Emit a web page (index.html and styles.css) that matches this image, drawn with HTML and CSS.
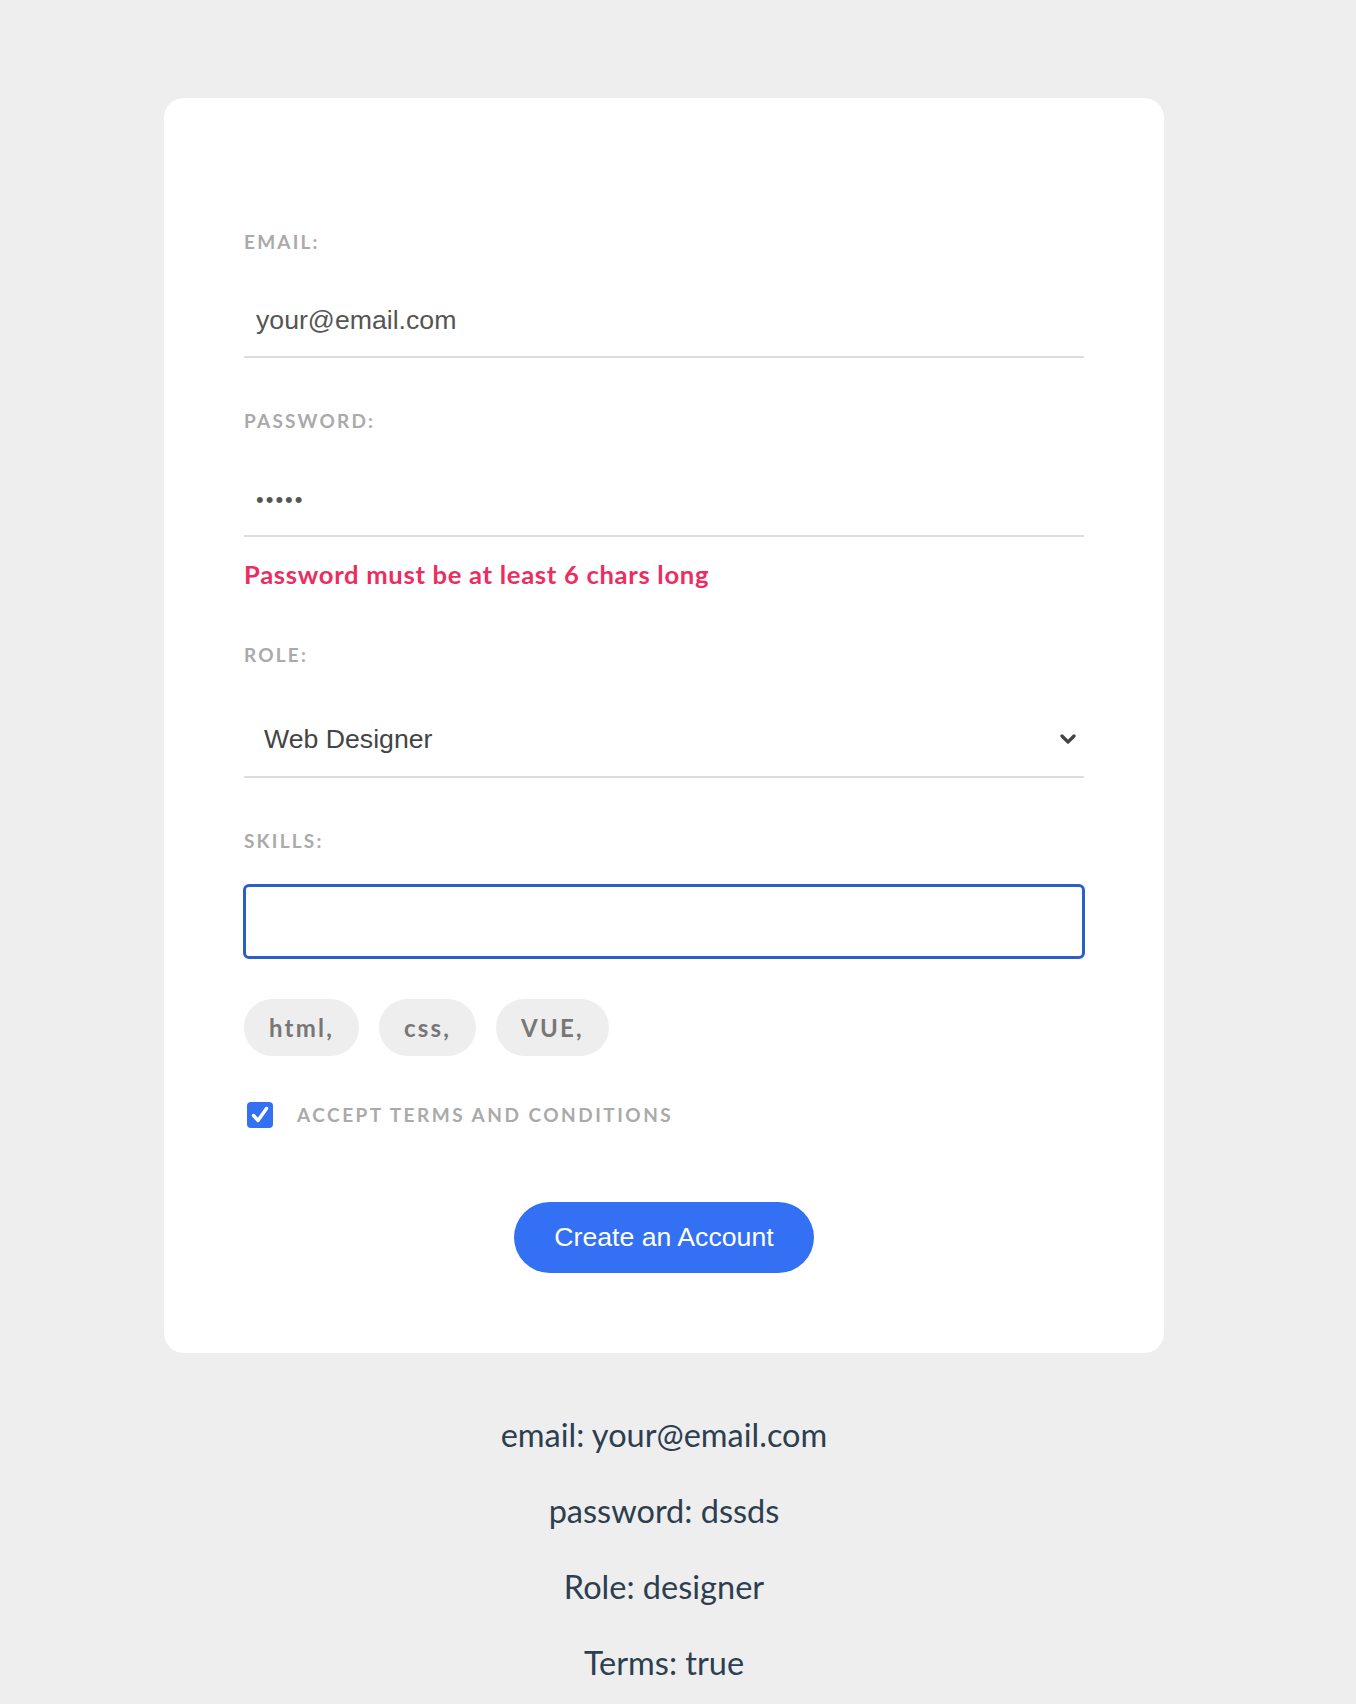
FILE: index.html
```html
<!DOCTYPE html>
<html lang="en">
<head>
<meta charset="utf-8">
<title>Sign up form</title>
<link rel="stylesheet" href="styles.css">
</head>
<body>
<div class="page">
  <form class="card">
    <label class="label">Email:</label>
    <input class="field" type="text" value="your@email.com">

    <label class="label">Password:</label>
    <div class="field field-pass">•••••</div>
    <div class="error">Password must be at least 6 chars long</div>

    <label class="label">Role:</label>
    <div class="select">
      <span>Web Designer</span>
      <svg class="chev" width="16" height="12" viewBox="0 0 16 12"><path d="M2 3 L8 9 L14 3" fill="none" stroke="#444" stroke-width="3.2" stroke-linecap="round" stroke-linejoin="round"/></svg>
    </div>

    <label class="label">Skills:</label>
    <div class="skills"></div>

    <div class="pills">
      <span class="pill">html,</span>
      <span class="pill">css,</span>
      <span class="pill">VUE,</span>
    </div>

    <div class="terms">
      <span class="check">
        <svg width="26" height="26" viewBox="0 0 26 26"><rect x="0" y="0" width="26" height="26" rx="4" fill="#3371f2"/><path d="M6.5 13.5 L11 18.5 L19.5 6.5" fill="none" stroke="#fff" stroke-width="3.4" stroke-linecap="round" stroke-linejoin="round"/></svg>
      </span>
      <span class="terms-text">Accept terms and conditions</span>
    </div>

    <div class="submit">
      <button type="button" class="btn">Create an Account</button>
    </div>
  </form>

  <div class="output">
    <p>email: your@email.com</p>
    <p>password: dssds</p>
    <p>Role: designer</p>
    <p>Terms: true</p>
  </div>
</div>
</body>
</html>
```

FILE: styles.css
```css
html, body {
  margin: 0;
  padding: 0;
  background: #eeeeee;
}

.page {
  padding: 98px 28px 0 0;
  font-family: Lato, "Open Sans", sans-serif;
}

.card {
  box-sizing: border-box;
  width: 1000px;
  margin: 0 auto;
  background: #ffffff;
  border-radius: 20px;
  padding: 81px 80px 80px;
  text-align: left;
}

.label {
  display: block;
  margin: 50px 0 30px;
  font-family: Lato, sans-serif;
  font-weight: 700;
  font-size: 19px;
  line-height: 26px;
  letter-spacing: 2.2px;
  text-transform: uppercase;
  color: #aaaaaa;
}

.field {
  display: block;
  box-sizing: border-box;
  width: 100%;
  margin: 0;
  padding: 20px 12px;
  border: none;
  border-bottom: 2px solid #dddddd;
  font-family: "Liberation Sans", Arial, sans-serif;
  font-size: 26.67px;
  line-height: 31px;
  height: 73px;
  color: #555555;
  background: transparent;
  outline: none;
}

.field-pass {
  font-size: 22px;
  letter-spacing: 2px;
  color: #555;
}

.error {
  margin-top: 20px;
  font-family: Lato, sans-serif;
  font-weight: 700;
  font-size: 25.6px;
  line-height: 35px;
  letter-spacing: 0.7px;
  color: #ec2d5f;
}

.select {
  display: flex;
  align-items: center;
  justify-content: space-between;
  box-sizing: border-box;
  height: 80px;
  padding: 4px 8px 0 20px;
  border-bottom: 2px solid #dddddd;
  font-family: "Liberation Sans", Arial, sans-serif;
  font-size: 26.67px;
  color: #444444;
}

.chev {
  display: block;
}

.skills {
  box-sizing: border-box;
  height: 75px;
  margin: 0 -1px;
  border: 3px solid #2b5fc8;
  border-radius: 6px;
}

.pills {
  display: flex;
  gap: 20px;
  margin-top: 40px;
}

.pill {
  display: inline-block;
  padding: 12px 25px;
  background: #eeeeee;
  border-radius: 30px;
  font-family: Lato, sans-serif;
  font-weight: 700;
  font-size: 24px;
  line-height: 33px;
  letter-spacing: 2.2px;
  color: #777777;
}

.terms {
  display: flex;
  align-items: center;
  gap: 24px;
  margin: 46px 0 30px 3px;
}

.check {
  display: block;
  width: 26px;
  height: 26px;
}

.check svg {
  display: block;
}

.terms-text {
  font-family: Lato, sans-serif;
  font-weight: 700;
  font-size: 19px;
  line-height: 26px;
  letter-spacing: 2.5px;
  text-transform: uppercase;
  color: #aaaaaa;
}

.submit {
  text-align: center;
  margin-top: 74px;
}

.btn {
  background: #3370f3;
  border: 0;
  padding: 20px 40px;
  border-radius: 36px;
  color: #ffffff;
  font-family: "Liberation Sans", Arial, sans-serif;
  font-size: 26.67px;
  line-height: 31px;
}

.output {
  margin-top: 60px;
  text-align: center;
  color: #2c3e50;
  font-family: Lato, sans-serif;
  font-size: 32.5px;
  line-height: 44px;
}

.output p {
  margin: 0 0 32px;
}
```
